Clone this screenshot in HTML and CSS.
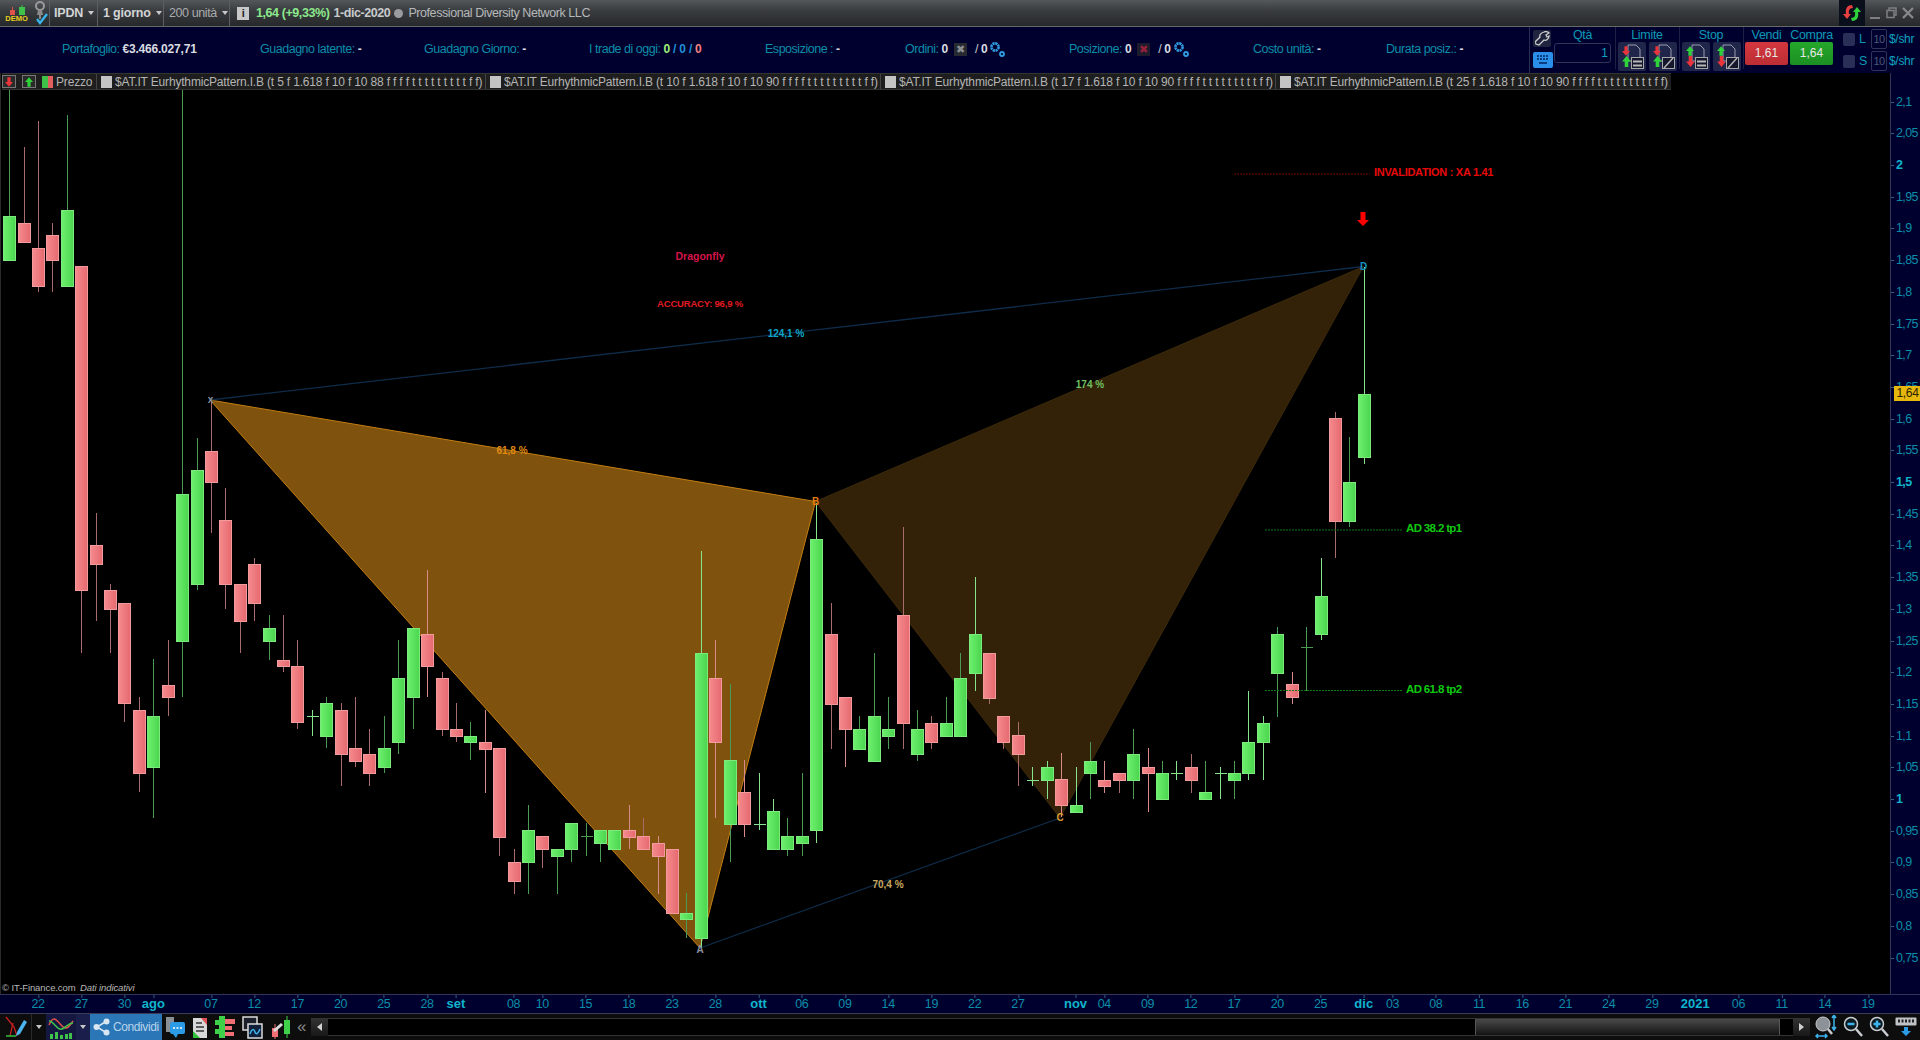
FILE: index.html
```html
<!DOCTYPE html>
<html lang="it">
<head>
<meta charset="utf-8">
<title>IPDN - ProRealTime</title>
<link rel="stylesheet" href="styles.css">
</head>
<body>
<svg class="defs" width="0" height="0" aria-hidden="true">
  <defs>
    <linearGradient id="gBody" x1="0" x2="1" y1="0" y2="0"><stop offset="0" stop-color="#6df06d"/><stop offset="1" stop-color="#4bd54f"/></linearGradient>
    <linearGradient id="rBody" x1="0" x2="1" y1="0" y2="0"><stop offset="0" stop-color="#f58a8d"/><stop offset="1" stop-color="#e56a70"/></linearGradient>
    <symbol id="arrDownRed" viewBox="0 0 10 12"><path d="M3 0h4v6h3l-5 6-5-6h3z" fill="#e8343a"/></symbol>
    <symbol id="arrUpGreen" viewBox="0 0 10 12"><path d="M5 0l5 6H7v6H3V6H0z" fill="#2fd23a"/></symbol>
    <symbol id="gears" viewBox="0 0 16 16"><circle cx="6" cy="6" r="3.6" fill="none" stroke="#2f9be0" stroke-width="2.6" stroke-dasharray="2.200 .6"/><circle cx="13" cy="13" r="2" fill="none" stroke="#2f9be0" stroke-width="1.8"/></symbol>
    <symbol id="docBars" viewBox="0 0 26 28"><path d="M9 2h8l4 4v9h-7v3H9z" fill="#20254a" stroke="#9a9eb0"/><rect x="12.500" y="14.500" width="12" height="11" fill="#15172c" stroke="#a8a8a8"/><path d="M14 18.500h9M14 22.500h9" stroke="#b8b8b8" stroke-width="2"/></symbol>
    <symbol id="docSlash" viewBox="0 0 26 28"><path d="M9 2h8l4 4v9h-7v3H9z" fill="#20254a" stroke="#9a9eb0"/><rect x="12.500" y="14.500" width="12" height="11" fill="#15172c" stroke="#a8a8a8"/><path d="M14 25l9-10" stroke="#b8b8b8" stroke-width="1.400"/></symbol>
  </defs>
</svg>

<div class="app">
  <header class="titlebar">
    <div class="tb-cell tb-demo">
      <svg width="24" height="10" viewBox="0 0 24 10"><rect x="5" y="5" width="5" height="5" fill="#e0524a"/><path d="M7.500 2v3" stroke="#e0524a"/><rect x="14" y="2" width="6" height="8" fill="#3fc24a"/><path d="M17 0v2" stroke="#3fc24a"/></svg>
      <span class="demo-label">DEMO</span>
    </div>
    <div class="tb-cell tb-pin">
      <svg width="14" height="24" viewBox="0 0 14 24"><circle cx="6" cy="5" r="4" fill="none" stroke="#9a9a9a" stroke-width="2"/><path d="M4 9h4l1 5H3z" fill="#8a8a8a"/><path d="M6 14v4" stroke="#888" stroke-width="2"/><path d="M3 18l3 4 7-9" fill="none" stroke="#39b4ea" stroke-width="2.400"/></svg>
    </div>
    <div class="tb-cell tb-ticker"><b>IPDN</b><i class="caret"></i></div>
    <div class="tb-cell tb-period"><b>1 giorno</b><i class="caret"></i></div>
    <div class="tb-cell tb-units"><span>200 unità</span><i class="caret"></i></div>
    <div class="tb-quote">
      <span class="info-btn">i</span>
      <b class="q-up">1,64 (+9,33%)</b>
      <b class="q-date">1-dic-2020</b>
      <span class="q-dot"></span>
      <span class="q-name">Professional Diversity Network LLC</span>
    </div>
    <div class="tb-right">
      <span class="sync">
        <svg width="22" height="22" viewBox="0 0 22 22"><path d="M11 3C6 3 4 7 5 12H2l4 5 4-5H8C7.500 9 8 6 12 6z" fill="#e8403f"/><path d="M11 19c5 0 7-4 6-9h3l-4-5-4 5h2c.5 3 0 6-4 6z" fill="#2fd23a"/></svg>
      </span>
      <span class="win-min"></span>
      <svg class="win-max" width="11" height="12" viewBox="0 0 11 12"><path d="M3 3V1h7v7H8M1 3.500h7v7H1z" fill="none" stroke="#7d7f82" stroke-width="1.500"/></svg>
      <svg class="win-close" width="12" height="12" viewBox="0 0 12 12"><path d="M1 1l10 10M11 1L1 11" stroke="#85878a" stroke-width="2.400"/></svg>
    </div>
  </header>

  <section class="infobar">
    <div class="stats">
      <div class="stat w198">Portafoglio: <b>€3.466.027,71</b></div>
      <div class="stat w164">Guadagno latente: <b>-</b></div>
      <div class="stat w165">Guadagno Giorno: <b>-</b></div>
      <div class="stat w176">I trade di oggi: <b class="c-green">0</b> <b class="c-blue">/ 0 /</b> <b class="c-red">0</b></div>
      <div class="stat w140">Esposizione : <b>-</b></div>
      <div class="stat w164">Ordini: <b>0</b>
        <span class="x-box x-grey">✖</span><span class="slash">/</span> <b>0</b>
        <svg class="gear" width="16" height="16"><use href="#gears"/></svg>
      </div>
      <div class="stat w184">Posizione: <b>0</b>
        <span class="x-box x-red">✖</span><span class="slash">/</span> <b>0</b>
        <svg class="gear" width="16" height="16"><use href="#gears"/></svg>
      </div>
      <div class="stat w133">Costo unità: <b>-</b></div>
      <div class="stat">Durata posiz.: <b>-</b></div>
    </div>

    <div class="ticket">
      <div class="tk-tools">
        <span class="tool-wrench"><svg width="15" height="15" viewBox="0 0 15 15"><path d="M9 1c2-1 4 0 5 1l-3 2 1 2 2-1c0 3-3 5-5 4l-5 5-3-1-1-2 5-5C4 4 6 2 9 1z" fill="none" stroke="#ccc" stroke-width="1.300"/></svg></span>
        <span class="tool-keys"><svg width="16" height="12" viewBox="0 0 16 12"><path d="M2 2h12M2 5h12" stroke="#0b3d80" stroke-width="2" stroke-dasharray="2 1"/><path d="M4 9h8" stroke="#0b3d80" stroke-width="2"/></svg></span>
      </div>
      <div class="tk-group tk-qty">
        <span class="tk-label">Qtà</span>
        <span class="qty-input">1</span>
      </div>
      <div class="tk-group tk-orders">
        <span class="tk-label">Limite</span>
        <div class="tk-buttons">
          <span class="ord-btn"><svg class="a1" width="8" height="10"><use href="#arrDownRed"/></svg><svg class="a2" width="9" height="11"><use href="#arrUpGreen"/></svg><svg width="26" height="28"><use href="#docBars"/></svg></span>
          <span class="ord-btn"><svg class="a1" width="8" height="10"><use href="#arrDownRed"/></svg><svg class="a2" width="9" height="11"><use href="#arrUpGreen"/></svg><svg width="26" height="28"><use href="#docSlash"/></svg></span>
        </div>
      </div>
      <div class="tk-group tk-orders">
        <span class="tk-label">Stop</span>
        <div class="tk-buttons">
          <span class="ord-btn"><svg class="a1" width="8" height="10"><use href="#arrUpGreen"/></svg><svg class="a2" width="9" height="11"><use href="#arrDownRed"/></svg><svg width="26" height="28"><use href="#docBars"/></svg></span>
          <span class="ord-btn"><svg class="a1" width="8" height="10"><use href="#arrUpGreen"/></svg><svg class="a2" width="9" height="11"><use href="#arrDownRed"/></svg><svg width="26" height="28"><use href="#docSlash"/></svg></span>
        </div>
      </div>
      <div class="tk-group tk-trade">
        <span class="tk-label">Vendi</span>
        <span class="trade-btn sell">1,61</span>
      </div>
      <div class="tk-group tk-trade tk-buy">
        <span class="tk-label">Compra</span>
        <span class="trade-btn buy">1,64</span>
      </div>
      <div class="tk-side">
        <div class="side-row"><span class="chk"></span><span class="side-l">L</span><span class="side-in">10</span><span class="side-u">$/shr</span></div>
        <div class="side-row"><span class="chk"></span><span class="side-l">S</span><span class="side-in">10</span><span class="side-u">$/shr</span></div>
      </div>
    </div>
  </section>

  <main class="chart-row">
    <div class="chart">
      <svg class="plot" id="plot" width="1890" height="921" viewBox="0 73 1890 921" xmlns="http://www.w3.org/2000/svg">
        <polygon class="tri-xab" points="210,400 700,948 815.500,501.500"/>
        <polygon class="tri-bcd" points="815.500,501.500 1060,818 1363.500,266.500"/>
        <line class="leg" x1="210" y1="400" x2="1363.500" y2="266.500"/>
        <line class="leg" x1="700" y1="948" x2="1060" y2="818"/>
        <g id="candles"></g>
        <line class="lv-red" x1="1234" y1="174" x2="1370" y2="174"/>
        <line class="lv-green" x1="1265" y1="530" x2="1402" y2="530"/>
        <line class="lv-green" x1="1265" y1="690.500" x2="1402" y2="690.500"/>
        <path class="sig-arrow" d="M1360.500 212h5v8h3.500l-6 6-6-6h3.500z"/>
        <text class="t-dragon" x="700" y="260">Dragonfly</text>
        <text class="t-acc" x="700" y="307">ACCURACY: 96,9 %</text>
        <text class="t-xd" x="786" y="337">124,1 %</text>
        <text class="t-xb" x="512" y="454">61,8 %</text>
        <text class="t-bd" x="1090" y="388">174 %</text>
        <text class="t-ac" x="888" y="888">70,4 %</text>
        <text class="pt pt-x" x="210.500" y="403">x</text>
        <text class="pt pt-a" x="700" y="953">A</text>
        <text class="pt pt-b" x="815.500" y="505">B</text>
        <text class="pt pt-c" x="1060" y="821">C</text>
        <text class="pt pt-d" x="1363.500" y="270">D</text>
        <text class="t-inv" x="1374" y="176">INVALIDATION : XA 1.41</text>
        <text class="t-ad" x="1406" y="532">AD 38.2 tp1</text>
        <text class="t-ad" x="1406" y="693">AD 61.8 tp2</text>
      </svg>
      <div class="legend">
        <span class="lg-btn"><svg width="8" height="10"><use href="#arrDownRed"/></svg></span>
        <span class="lg-btn"><svg width="8" height="10"><use href="#arrUpGreen"/></svg></span>
        <span class="lg-item lg-price"><i class="sw-price"></i>Prezzo</span>
        <span class="lg-item w1"><i class="sw"></i>$AT.IT EurhythmicPattern.I.B (t 5 f 1.618 f 10 f 10 88 f f f f t t t t t t t t t f f)</span>
        <span class="lg-item w2"><i class="sw"></i>$AT.IT EurhythmicPattern.I.B (t 10 f 1.618 f 10 f 10 90 f f f f t t t t t t t t t f f)</span>
        <span class="lg-item w2"><i class="sw"></i>$AT.IT EurhythmicPattern.I.B (t 17 f 1.618 f 10 f 10 90 f f f f t t t t t t t t t f f)</span>
        <span class="lg-item w3"><i class="sw"></i>$AT.IT EurhythmicPattern.I.B (t 25 f 1.618 f 10 f 10 90 f f f f t t t t t t t t t f f)</span>
      </div>
      <div class="credit">© IT-Finance.com <em>Dati indicativi</em></div>
    </div>
    <aside class="price-axis" id="priceAxis"><span class="last-price">1,64</span></aside>
  </main>

  <div class="time-axis" id="timeAxis"></div>

  <footer class="toolbar">
    <span class="bt bt-pen"><svg width="22" height="24" viewBox="0 0 22 24"><path d="M1 2l8 10 3 9M5 21l3-13" fill="none" stroke="#c81e1e" stroke-width="1.300"/><path d="M1 21h10" stroke="#2fc23a" stroke-width="1.500"/><path d="M12 17l7-12 3 2-7 12-4 2z" fill="#4cb4ee"/></svg></span>
    <span class="bt bt-drop"><i class="caret"></i></span>
    <span class="bt bt-ind"><svg width="26" height="24" viewBox="0 0 26 24"><path d="M1 10c4-10 7-6 12 0s8 2 12-4" fill="none" stroke="#e2504a" stroke-width="1.500"/><path d="M1 6c5 0 8 10 13 8s6-6 11-6" fill="none" stroke="#3fc24a" stroke-width="1.500"/><path d="M2 19h3v5H2zm5-2h3v7H7zm5 3h3v4h-3zm5-1h3v5h-3zm4-1h3v6h-3z" fill="#3fc24a"/></svg></span>
    <span class="bt bt-drop2"><i class="caret"></i></span>
    <span class="bt-share"><svg width="17" height="18" viewBox="0 0 17 18"><path d="M13 3.500L4 9l9 5.500" fill="none" stroke="#d8e6f2" stroke-width="1.500"/><circle cx="13.500" cy="3.500" r="3" fill="#d8e6f2"/><circle cx="3.500" cy="9" r="3" fill="#d8e6f2"/><circle cx="13.500" cy="14.500" r="3" fill="#d8e6f2"/></svg>Condividi</span>
    <span class="bt-icons">
      <svg width="20" height="23" viewBox="0 0 20 23"><path d="M1 1h8v15H1z" fill="#8a8f96"/><rect x="5" y="6" width="15" height="12" rx="2" fill="#2c9be6"/><path d="M8 18l3 4 2-4z" fill="#2c9be6"/><path d="M8 12h9" stroke="#fff" stroke-dasharray="2 1.500" stroke-width="1.500"/></svg>
      <svg width="16" height="23" viewBox="0 0 16 23"><path d="M1 2h14v20H1z" fill="#d8d8d8"/><path d="M9 2h6v7z" fill="#e0525a"/><path d="M1 22v-7l7 7z" fill="#2fc23a"/><path d="M4 7h6M4 11h8M4 15h8" stroke="#333" stroke-width="1.500"/></svg>
      <svg width="20" height="22" viewBox="0 0 20 22"><rect x="4" y="0" width="6" height="22" fill="#3fd04a"/><rect x="0" y="4" width="6" height="5" fill="#3fd04a"/><rect x="0" y="13" width="6" height="5" fill="#3fd04a"/><rect x="10" y="3" width="10" height="5" fill="#ef6f75"/><rect x="10" y="10" width="7" height="4" fill="#ef6f75"/><rect x="10" y="16" width="9" height="4" fill="#ef6f75"/></svg>
      <svg width="21" height="23" viewBox="0 0 21 23"><rect x="1" y="1" width="14" height="13" fill="#1b1f2a" stroke="#dcdcdc" stroke-width="1.500"/><rect x="6" y="8" width="14" height="14" fill="#10203a" stroke="#dcdcdc" stroke-width="1.500"/><path d="M8 18c2-6 4-5 5-2s3 2 5-3" fill="none" stroke="#3db4ee" stroke-width="1.500"/></svg>
      <svg width="21" height="23" viewBox="0 0 21 23"><rect x="14" y="4" width="6" height="14" fill="#3fd04a"/><path d="M17 0v22" stroke="#3fd04a"/><rect x="2" y="12" width="6" height="9" fill="#ef6f75"/><path d="M5 8v15" stroke="#ef6f75"/><path d="M3 14l8-7 2 2-8 7z" fill="#dcdcdc"/></svg>
    </span>
    <span class="bt-chev">«</span>
    <div class="scroll">
      <span class="sc-btn"><i class="tri-l"></i></span>
      <div class="sc-track"><span class="sc-thumb"></span></div>
      <span class="sc-btn"><i class="tri-r"></i></span>
    </div>
    <span class="bt-zoom">
      <svg width="22" height="24" viewBox="0 0 22 24"><circle cx="8" cy="9" r="7" fill="#8d9298" stroke="#c8ccd0"/><path d="M13 14l4 5" stroke="#c8ccd0" stroke-width="2.500"/><path d="M19 1v13M17 3l2-3 2 3M17 12l2 3 2-3M1 21h11M3 19l-2 2 2 2M10 19l2 2-2 2" fill="none" stroke="#3db4ee" stroke-width="1.500"/></svg>
      <svg width="20" height="22" viewBox="0 0 20 22"><circle cx="8" cy="8" r="6.500" fill="#0c1a22" stroke="#c8ccd0" stroke-width="1.500"/><path d="M13 13l6 7" stroke="#c8ccd0" stroke-width="2.500"/><path d="M4.500 8h7" stroke="#3db4ee" stroke-width="2.500"/></svg>
      <svg width="20" height="22" viewBox="0 0 20 22"><circle cx="8" cy="8" r="6.500" fill="#0c1a22" stroke="#c8ccd0" stroke-width="1.500"/><path d="M13 13l6 7" stroke="#c8ccd0" stroke-width="2.500"/><path d="M4.500 8h7M8 4.500v7" stroke="#3db4ee" stroke-width="2.500"/></svg>
      <svg width="22" height="20" viewBox="0 0 22 20"><rect x="0.500" y="0.500" width="21" height="8" rx="1" fill="#bfc3c7"/><path d="M3 4h16" stroke="#222" stroke-width="3" stroke-dasharray="2 1.500"/><path d="M9 10h4v4h3l-5 5-5-5h3z" fill="#2c9be6"/></svg>
    </span>
  </footer>
</div>
<script src="chart.js"></script>
</body>
</html>
```

FILE: styles.css
```css
* { box-sizing: border-box; }
html, body { margin: 0; height: 100%; background: #000; overflow: hidden; }
body { font-family: "Liberation Sans", Arial, sans-serif; font-size: 12px; color: #bbb; }
.defs { position: absolute; }
i, em { font-style: normal; }
.app { display: flex; flex-direction: column; width: 1920px; height: 1040px; }

/* title bar */
.titlebar { display: flex; align-items: center; height: 27px; flex: none; color: #c4c6c8; font-size: 12.500px; letter-spacing: -.2px; white-space: nowrap;
  background: linear-gradient(#55585b, #3a3d40 40%, #26282a); border-bottom: 1px solid #65686a; }
.tb-cell { display: flex; align-items: center; height: 26px; border-right: 1px solid #5c5f62; flex: none; }
.tb-demo { width: 33px; flex-direction: column; justify-content: center; padding-top: 2px; border: 0; }
.demo-label { color: #e8d01e; font-size: 7.500px; font-weight: bold; line-height: 8px; letter-spacing: 0; }
.tb-pin { width: 17px; justify-content: center; }
.tb-ticker { width: 48px; padding-left: 4px; color: #d2d4d6; }
.tb-period { width: 66px; padding-left: 5px; color: #d2d4d6; }
.tb-units { width: 66px; padding-left: 5px; color: #a9abad; letter-spacing: -.4px; }
.caret { display: inline-block; width: 0; height: 0; margin-left: 5px; border: 3px solid transparent; border-top: 4px solid #c8c8c8; border-bottom: 0; }
.tb-quote { display: flex; align-items: center; margin-left: 7px; letter-spacing: -.42px; }
.info-btn { width: 12px; height: 13px; line-height: 13px; text-align: center; background: #c8c8c8; color: #222; font-weight: bold; font-size: 11px; margin-right: 7px; }
.q-up { color: #8ce88c; }
.q-date { color: #c8cacc; margin-left: 4px; }
.q-dot { width: 9px; height: 9px; border-radius: 50%; background: #9a9c9e; margin: 0 5px 0 4px; }
.q-name { color: #b6b8ba; }
.tb-right { display: flex; align-items: center; margin-left: auto; height: 26px; }
.sync { display: flex; align-items: center; justify-content: center; width: 26px; height: 26px; background: #0a0f1c; }
.win-min { width: 10px; height: 2.500px; background: #7d7f82; margin: 10px 6px 0 5px; }
.win-max { margin-right: 5px; }
.win-close { margin-right: 6px; }

/* account info + order ticket */
.infobar { display: flex; height: 46px; flex: none; background: #00002e; }
.stats { display: flex; align-items: center; padding: 0 0 2px 62px; height: 46px; flex: none; width: 1529px; color: #0b8ea8; font-size: 12.500px; letter-spacing: -.48px; white-space: nowrap; }
.stat { flex: none; display: flex; align-items: center; gap: 3px; }
.stat b { color: #d8dce0; letter-spacing: -.2px; font-size: 12px; }
.stat b.c-green { color: #9df07a; }
.stat b.c-blue { color: #1e8fd8; }
.stat b.c-red { color: #f08080; }
.w198 { width: 198px; } .w164 { width: 164px; } .w165 { width: 165px; } .w176 { width: 176px; } .w140 { width: 140px; } .w184 { width: 184px; } .w133 { width: 133px; }
.x-box { width: 13px; height: 13px; line-height: 13px; text-align: center; font-size: 11px; background: #262a30; margin: 0 5px 0 3px; letter-spacing: 0; }
.x-grey { color: #8a8e92; }
.x-red { color: #96203a; background: #1c1c2c; }
.slash { color: #c8ccd0; }
.gear { margin-left: -1px; }

.ticket { display: flex; flex: none; width: 391px; height: 46px; border-left: 1px solid #2a2c52; color: #0b9ab5; }
.tk-tools { display: flex; flex-direction: column; width: 24px; padding: 3px 0 0 3px; gap: 5px; flex: none; }
.tool-wrench { display: flex; align-items: center; justify-content: center; width: 18px; height: 17px; background: #20243e; border-radius: 2px; }
.tool-keys { display: flex; align-items: center; justify-content: center; width: 20px; height: 16px; background: #2a8fe8; border-radius: 2px; }
.tk-group { display: flex; flex-direction: column; align-items: center; flex: none; }
.tk-label { height: 15px; line-height: 16px; font-size: 12.500px; letter-spacing: -.3px; white-space: nowrap; }
.tk-qty { width: 62px; border-right: 1px solid #1e2044; height: 42px; padding-right: 4px; }
.qty-input { display: block; width: 57px; height: 20px; margin-top: 1px; border: 1px solid #2f3458; border-radius: 3px; text-align: right; padding-right: 2px; line-height: 19px; color: #0ea2c0; }
.tk-orders { width: 64px; padding: 0 2px 0 1px; border-right: 1px solid #1e2044; height: 42px; }
.tk-buttons { display: flex; gap: 3px; height: 30px; }
.ord-btn { position: relative; display: flex; align-items: center; justify-content: center; width: 28px; height: 29px; background: #20254a; border-radius: 2px; }
.ord-btn .a1 { position: absolute; left: 4px; top: 4px; }
.ord-btn .a2 { position: absolute; left: 4px; top: 14px; }
.tk-trade { width: 43px; margin-left: 1px; }
.tk-buy { margin-left: 2px; }
.trade-btn { display: block; width: 43px; height: 23px; line-height: 23px; text-align: center; color: #e8e8e8; border-radius: 2px; }
.sell { background: linear-gradient(#d5363e, #bb2e34); }
.buy { background: linear-gradient(#25a82b, #1b8f22); }
.tk-side { display: flex; flex-direction: column; padding: 2px 0 0 10px; gap: 2px; flex: none; }
.side-row { display: flex; align-items: center; height: 20px; }
.chk { width: 12px; height: 13px; background: #2a2f58; border-radius: 2px; }
.side-l { width: 16px; padding-left: 4px; font-size: 12.500px; }
.side-in { width: 16px; height: 20px; line-height: 19px; text-align: center; border: 1px solid #2f3458; border-radius: 2px; color: #4a5a78; font-size: 11px; letter-spacing: -.5px; }
.side-u { margin-left: 2px; color: #0ea2c0; letter-spacing: -.3px; }

/* chart */
.chart-row { display: flex; flex: none; height: 921px; }
.chart { position: relative; width: 1890px; height: 921px; background: #000; border-left: 1px solid #2a2a2a; flex: none; overflow: hidden; }
.plot { display: block; margin-left: -1px; }
.tri-xab { fill: #7f520d; stroke: #c47e12; stroke-width: 1; }
.tri-bcd { fill: #332108; stroke: #3d2a0c; stroke-width: 1; }
.leg { stroke: #0e2c4a; stroke-width: 1.300; }
.wick { shape-rendering: crispEdges; stroke-width: 1; }
.wick-g { stroke: #4a9a55; }
.wick-r { stroke: #a86c6c; }
.wick-G { stroke: #86e48e; }
.wick-R { stroke: #d88a8a; }
.body-g, .body-G { fill: url(#gBody); stroke: #7cea7c; stroke-width: 1; shape-rendering: crispEdges; }
.body-r, .body-R { fill: url(#rBody); stroke: #f29a9c; stroke-width: 1; shape-rendering: crispEdges; }
.lv-red { stroke: #7a0606; stroke-width: 1; stroke-dasharray: 2 1; }
.lv-green { stroke: #0e7a18; stroke-width: 1; stroke-dasharray: 2 1; }
.sig-arrow { fill: #f00; }
.plot text { font-family: "Liberation Sans", Arial, sans-serif; }
.t-dragon { fill: #d5144a; font-size: 10.500px; font-weight: bold; text-anchor: middle; }
.t-acc { fill: #e01a22; font-size: 9.500px; font-weight: bold; text-anchor: middle; letter-spacing: -.2px; }
.t-xd { fill: #0ea5c8; font-size: 10px; font-weight: bold; text-anchor: middle; }
.t-xb { fill: #e08a10; font-size: 10px; font-weight: bold; text-anchor: middle; }
.t-bd { fill: #6ec060; font-size: 10px; font-weight: bold; text-anchor: middle; }
.t-ac { fill: #c8a860; font-size: 10px; font-weight: bold; text-anchor: middle; }
.pt { font-size: 10px; font-weight: bold; text-anchor: middle; }
.pt-x, .pt-a { fill: #8a94a0; }
.pt-b { fill: #e07a10; }
.pt-c { fill: #d89a30; }
.pt-d { fill: #1590c0; }
.t-inv { fill: #e80a0a; font-size: 11px; font-weight: bold; letter-spacing: -.3px; }
.t-ad { fill: #10c810; font-size: 11.500px; font-weight: bold; letter-spacing: -.65px; }
.legend { position: absolute; left: 1px; top: 0; height: 17px; display: flex; align-items: center; background: #1e1e1e; border-top: 1px solid #333; border-bottom: 1px solid #333; color: #b4b4b4; white-space: nowrap; letter-spacing: -.17px; }
.lg-btn { display: flex; align-items: center; justify-content: center; width: 14px; height: 13px; margin-right: 6px; background: #2a2a2a; border: 1px solid #777; flex: none; }
.lg-item { display: flex; align-items: center; height: 15px; border-right: 1px solid #444; flex: none; overflow: hidden; }
.lg-price { width: 55px; }
.sw-price { width: 11px; height: 12px; margin-right: 3px; background: linear-gradient(90deg, #3fc24a 50%, #e0605f 50%); flex: none; }
.sw { width: 11px; height: 12px; margin: 0 3px 0 4px; background: #c4c4c4; flex: none; }
.w1 { width: 389px; } .w2 { width: 395px; } .w3 { width: 395px; border-right: 0; }
.credit { position: absolute; left: 1px; bottom: -1px; color: #b8b8b8; font-size: 9.500px; line-height: 14px; letter-spacing: -.1px; }
.credit em { font-style: italic; margin-left: 2px; }

.price-axis { position: relative; width: 30px; height: 921px; flex: none; background: #00002e; border-left: 1px solid #33345a; overflow: hidden; }
.p-label { position: absolute; left: 5px; transform: translateY(-50%); color: #0b8ea8; font-size: 12.500px; letter-spacing: -.6px; line-height: 14px; }
.p-label::before { content: ""; position: absolute; left: -5px; top: 7px; width: 3px; height: 1px; background: #33607a; }
.p-major { color: #0fb4cc; font-weight: bold; }
.last-price { position: absolute; z-index: 1; left: 3px; top: 313px; width: 27px; height: 15px; line-height: 15px; text-align: center; background: #e6b80c; color: #2a2000; letter-spacing: -.3px; }

/* time axis */
.time-axis { position: relative; height: 20px; flex: none; background: #00002e; border-top: 1px solid #33345a; border-bottom: 1px solid #3a3c58; }
.t-label { position: absolute; top: 2px; transform: translateX(-50%); color: #0b8ea8; font-size: 12.500px; line-height: 14px; letter-spacing: -.35px; }
.t-label::before { content: ""; position: absolute; left: 50%; top: -2px; width: 1px; height: 3px; background: #33607a; }
.t-major { color: #0fb4cc; font-weight: bold; font-size: 13px; letter-spacing: 0; }

/* bottom toolbar */
.toolbar { display: flex; align-items: center; flex: 1; min-height: 0; background: #0d0d0d; }
.bt { display: flex; align-items: center; justify-content: center; height: 27px; flex: none; }
.bt-pen { width: 31px; }
.bt-drop { width: 14px; border-left: 1px solid #2a2a2a; }
.bt-drop .caret, .bt-drop2 .caret { margin: 0; }
.bt-ind { width: 30px; margin-left: 1px; background: #141840; }
.bt-drop2 { width: 14px; background: #1a1e4a; }
.bt-share { display: flex; align-items: center; gap: 3px; width: 72px; height: 27px; padding-left: 3px; background: #2a76b6; color: #b8d4ea; letter-spacing: -.4px; flex: none; overflow: hidden; }
.bt-icons { display: flex; align-items: center; gap: 7px; margin-left: 3px; flex: none; }
.bt-chev { width: 14px; margin-left: 6px; color: #8a8a8a; font-size: 17px; line-height: 24px; flex: none; }
.scroll { display: flex; align-items: center; width: 1499px; height: 18px; background: #000; border-top: 1px solid #333; border-bottom: 1px solid #333; flex: none; }
.sc-btn { display: flex; align-items: center; justify-content: center; width: 17px; height: 18px; background: linear-gradient(#333, #181818); flex: none; }
.tri-l { border: 4px solid transparent; border-right: 5px solid #d0d0d0; border-left: 0; }
.tri-r { border: 4px solid transparent; border-left: 5px solid #d0d0d0; border-right: 0; }
.sc-track { display: flex; justify-content: flex-end; flex: 1; height: 16px; padding-right: 13px; }
.sc-thumb { width: 305px; height: 16px; background: linear-gradient(#4a4a4a, #141414); border-left: 1px solid #555; border-right: 1px solid #555; }
.bt-zoom { display: flex; align-items: center; gap: 6px; margin-left: 5px; flex: none; }
```

FILE: chart.js
```js
// Candles: [colour, wick top, body top, body bottom, wick bottom]; each segment has its own y origin and scale.
// Capital colour letters mark candles whose wick is drawn brighter.
var segments = [
  { y0: 90, k: 1 / 2.119, rows: [
    ['g',-36,267,361,361],['r',120,281,322,322],['r',66,335,415,428],['r',281,308,361,428],['g',53,254,415,415],
    ['r',374,374,1060,1193],['r',897,964,1005,1126],['r',1046,1059,1100,1193],['r',1086,1086,1300,1340],['r',1287,1314,1447,1488],
    ['g',1206,1327,1434,1542],['r',1165,1260,1286,1327],['g',-36,857,1167,1286],['g',737,805,1046,1060],['r',657,765,831,938],
    ['r',843,911,1046,1100],['r',1046,1046,1126,1193],['r',992,1005,1086,1126],['g',1112,1139,1167,1207],['r',1112,1207,1220,1234],
    ['r',1165,1220,1340,1354],['G',1314,1327,1327,1368],['g',1287,1300,1368,1394],['r',1300,1314,1407,1475],['r',1287,1394,1421,1434],
    ['r',1354,1407,1447,1475],['g',1327,1394,1434,1447],['g',1165,1247,1382,1407],['g',1139,1139,1287,1354],['R',1018,1153,1220,1286],
    ['r',1233,1247,1354,1368],['r',1300,1354,1368,1382],['g',1340,1368,1382,1420]
  ] },
  { y0: 500, k: 1 / 3, rows: [
    ['R',630,725,746,878],['r',745,745,1010,1067],['r',1048,1086,1144,1181],['g',915,990,1086,1181],['r',1008,1008,1048,1105],
    ['g',1048,1048,1067,1181],['g',970,970,1048,1086],['g',970,1009,1009,1067],['g',990,990,1029,1086],['g',990,990,1048,1048],
    ['R',915,990,1010,1048],['r',953,1009,1048,1048],['R',1009,1028,1067,1181],['r',1048,1048,1238,1238],['g',1180,1238,1257,1314],
    ['G',153,459,1314,1345],['R',421,535,726,955],['g',552,781,971,1087],['R',781,877,971,1010],['G',819,971,971,990],
    ['G',896,934,1048,1048],['g',953,1009,1048,1067],['g',819,1009,1028,1067],['G',8,118,990,1029],['r',308,401,611,746],
    ['R',591,591,688,801],['g',649,687,746,746],['g',460,649,782,782],['g',591,687,707,746],['r',80,344,668,746],
    ['g',629,687,763,782],['r',649,668,727,746],['g',591,668,707,707],['g',459,535,707,707],['G',231,401,518,573],
    ['r',459,459,593,612],['r',649,649,727,746],['r',667,706,763,858],['G',800,839,839,858],['G',782,800,839,897],
    ['R',760,838,916,950],['G',800,916,935,935],['g',725,782,820,897],['R',782,839,858,878],['r',820,820,839,878],
    ['g',687,762,839,897],['R',745,800,820,935],['g',782,820,897,897],['G',782,820,820,839],['r',762,800,839,878],
    ['g',782,877,897,897],['G',800,820,820,897],['g',782,820,839,897],['G',572,725,820,839],['G',649,668,726,839],
    ['g',382,401,518,650],['R',517,553,592,611],['g',382,440,440,572],['G',173,289,402,421]
  ] },
  { y0: 150, k: 1 / 3, rows: [
    ['r',787,805,1112,1225],['g',862,995,1112,1130],['G',350,731,922,941]
  ] }
];

var SVG_NS = 'http://www.w3.org/2000/svg';
var STEP = 14.41, X0 = 9.2, BODY = 12;
var group = document.getElementById('candles');

function candleX(i) { return Math.round(X0 + STEP * i); }

function add(tag, cls, attrs) {
  var el = document.createElementNS(SVG_NS, tag);
  el.setAttribute('class', cls);
  for (var k in attrs) el.setAttribute(k, attrs[k]);
  group.appendChild(el);
}

var index = 0;
segments.forEach(function (seg) {
  seg.rows.forEach(function (r) {
    var x = candleX(index) + 0.5;
    var c = r[0];
    var y = r.slice(1).map(function (v) { return Math.round(seg.y0 + v * seg.k); });
    add('line', 'wick wick-' + c, { x1: x, x2: x, y1: y[0], y2: y[3] });
    if (y[1] === y[2]) {
      add('line', 'wick wick-' + c, { x1: x - BODY / 2, x2: x + BODY / 2, y1: y[1] + 0.5, y2: y[1] + 0.5 });
    } else {
      add('rect', 'body-' + c, { x: x - BODY / 2, y: y[1] + 0.5, width: BODY, height: y[2] - y[1] });
    }
    index++;
  });
});

// Price axis: 0,05 step, 634 px per unit, with 2 at y=165 on the page.
var axis = document.getElementById('priceAxis');
for (var n = 42; n >= 15; n--) {
  var p = n * 0.05;
  var label = document.createElement('span');
  var major = n % 10 === 0;
  label.className = 'p-label' + (major ? ' p-major' : '');
  label.textContent = String(Math.round(p * 100) / 100).replace('.', ',');
  label.style.top = (165 + (2 - p) * 634 - 73) + 'px';
  axis.appendChild(label);
}

// Time axis: labels sit under candle slots.
var ticks = [
  [2,'22'],[5,'27'],[8,'30'],[10,'ago',1],[14,'07'],[17,'12'],[20,'17'],[23,'20'],[26,'25'],[29,'28'],[31,'set',1],
  [35,'08'],[37,'10'],[40,'15'],[43,'18'],[46,'23'],[49,'28'],[52,'ott',1],[55,'06'],[58,'09'],[61,'14'],[64,'19'],
  [67,'22'],[70,'27'],[74,'nov',1],[76,'04'],[79,'09'],[82,'12'],[85,'17'],[88,'20'],[91,'25'],[94,'dic',1],[96,'03'],
  [99,'08'],[102,'11'],[105,'16'],[108,'21'],[111,'24'],[114,'29'],[117,'2021',1],[120,'06'],[123,'11'],[126,'14'],[129,'19']
];
var timeAxis = document.getElementById('timeAxis');
ticks.forEach(function (t) {
  var el = document.createElement('span');
  el.className = 't-label' + (t[2] ? ' t-major' : '');
  el.textContent = t[1];
  el.style.left = (X0 + STEP * t[0]) + 'px';
  timeAxis.appendChild(el);
});
```
